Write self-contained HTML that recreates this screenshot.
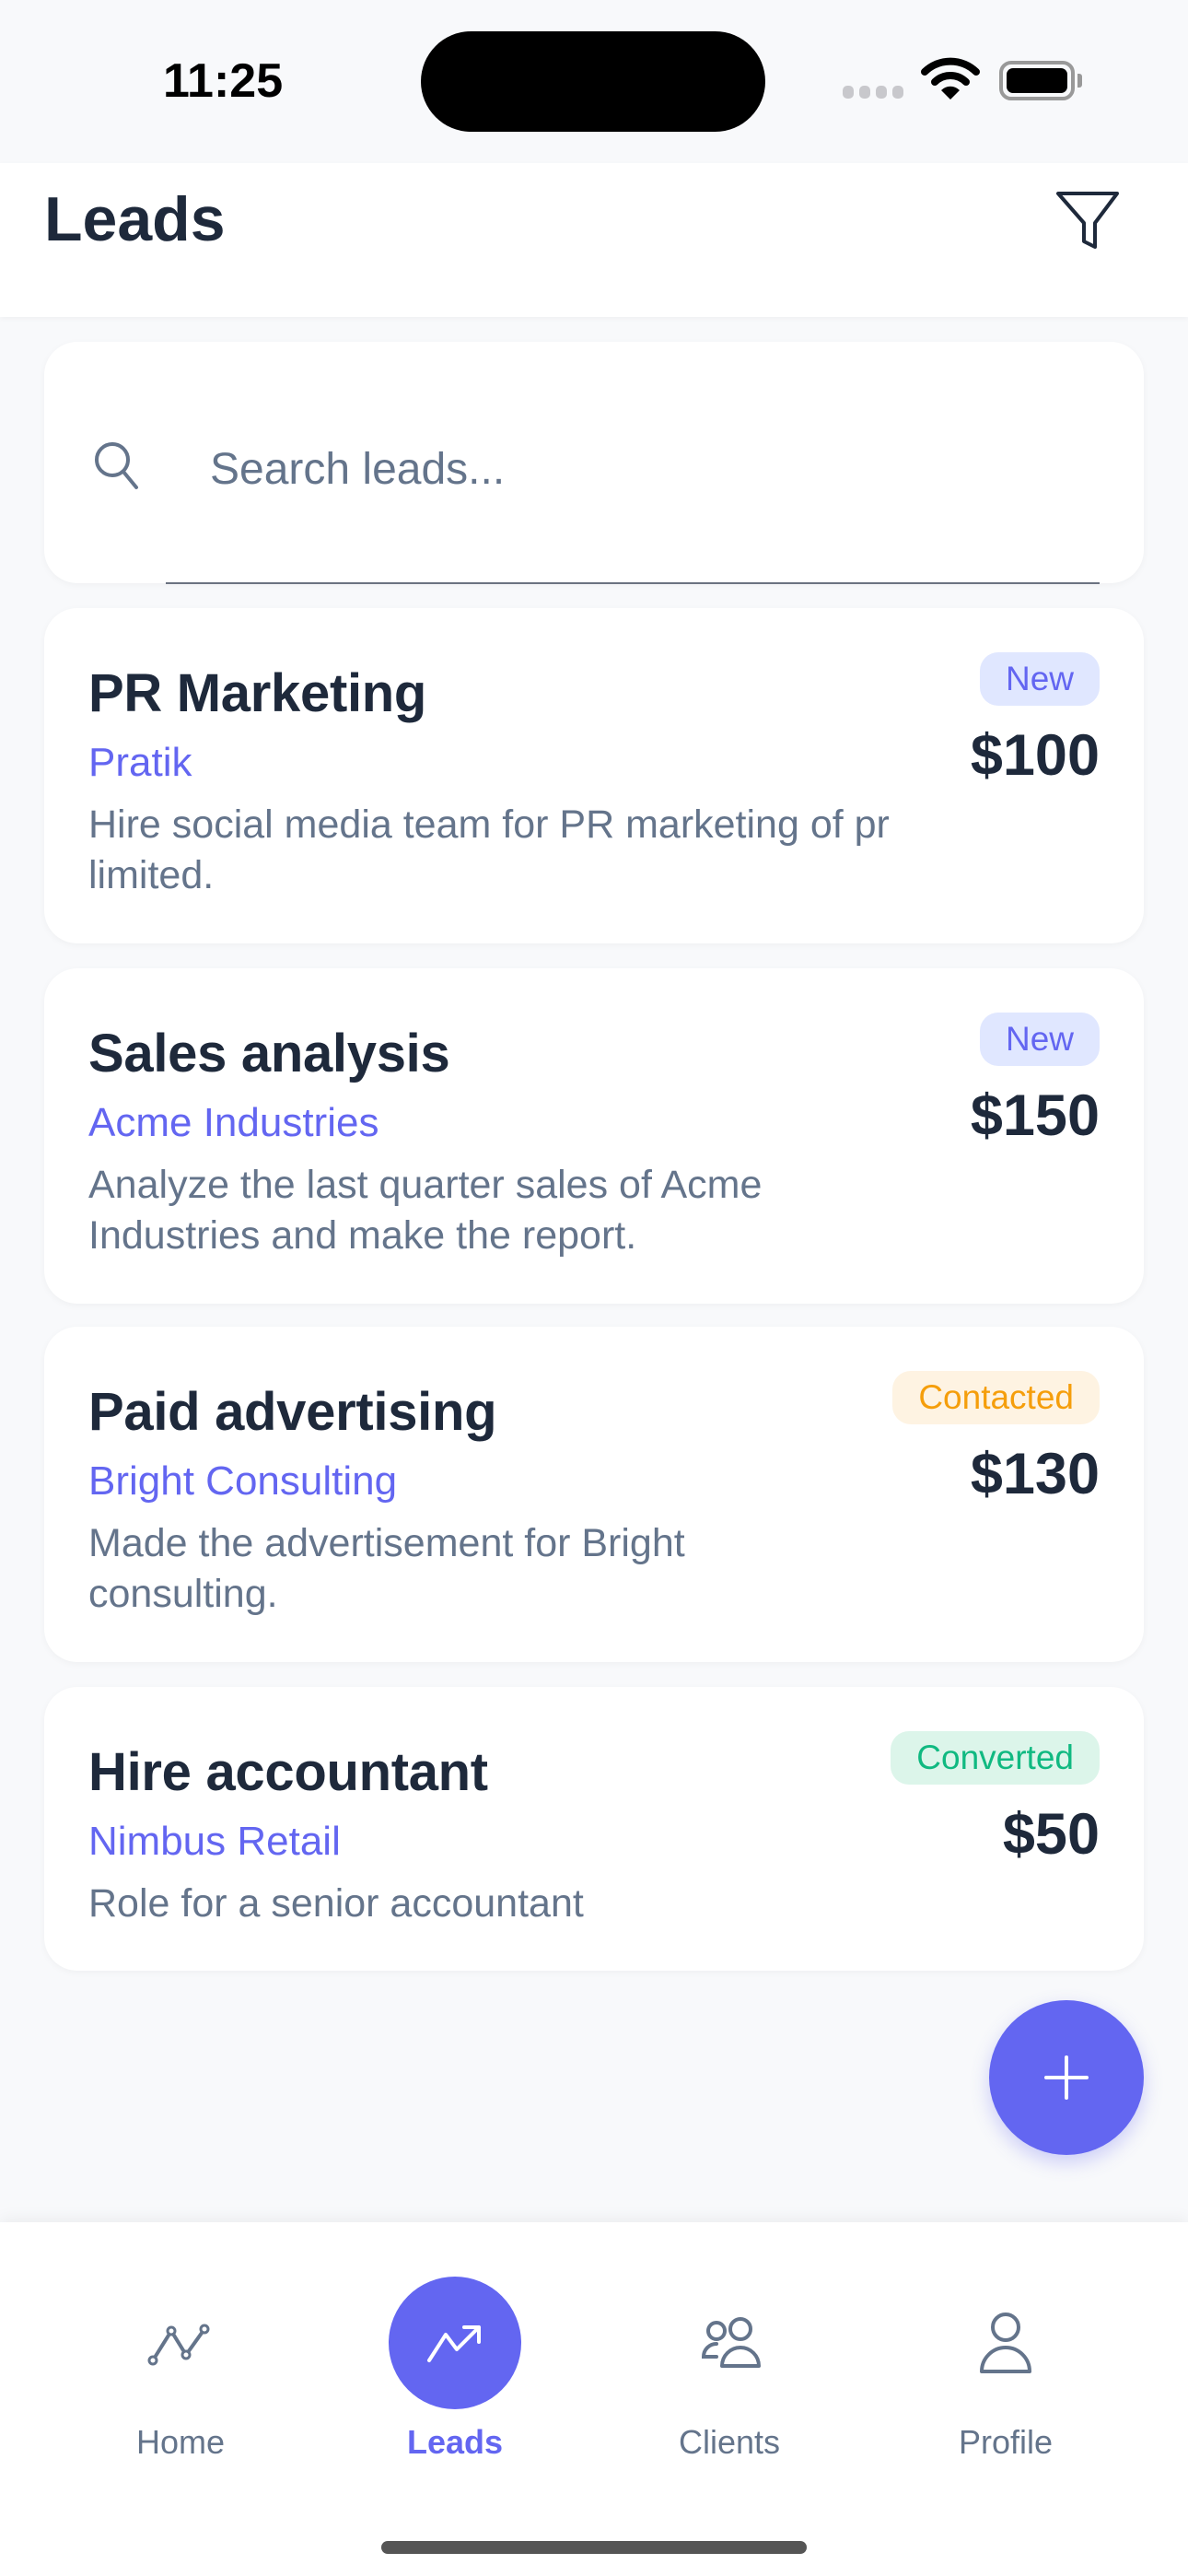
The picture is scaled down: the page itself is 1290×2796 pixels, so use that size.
<!DOCTYPE html>
<html><head><meta charset="utf-8"><style>
*{margin:0;padding:0;box-sizing:border-box}
body{width:1290px;height:2796px;background:#f8f9fb;font-family:"Liberation Sans",sans-serif;position:relative;overflow:hidden}
.a{position:absolute}
.card{position:absolute;left:48px;width:1194px;background:#fff;border-radius:36px;box-shadow:0 2px 8px rgba(0,0,0,0.04)}
.t{position:absolute;left:48px;font-size:58px;font-weight:bold;color:#1e293b;white-space:nowrap;letter-spacing:-0.3px}
.c{position:absolute;left:48px;font-size:44px;color:#6366f1;white-space:nowrap}
.d{position:absolute;left:48px;width:1000px;font-size:43px;line-height:55px;color:#64748b;white-space:nowrap}
.b{position:absolute;right:48px;height:58px;border-radius:20px;font-size:37px;line-height:58px;text-align:center;padding:0 28px}
.p{position:absolute;right:48px;font-size:63px;font-weight:bold;color:#1e293b}
.nl{position:absolute;top:2630px;font-size:36px;color:#64748b;width:300px;text-align:center}
</style></head><body>
<div class="a" style="left:177px;top:58px;font-size:52px;font-weight:bold;color:#000">11:25</div>
<div class="a" style="left:457px;top:34px;width:374px;height:109px;border-radius:55px;background:#000"></div>
<div class="a" style="left:915px;top:93px;display:flex;gap:6px"><i style="width:12px;height:14px;border-radius:5px;background:#c8c8cc;display:block"></i><i style="width:12px;height:14px;border-radius:5px;background:#c8c8cc;display:block"></i><i style="width:12px;height:14px;border-radius:5px;background:#c8c8cc;display:block"></i><i style="width:12px;height:14px;border-radius:5px;background:#c8c8cc;display:block"></i></div>
<svg class="a" style="left:1000px;top:62px" width="64" height="48" viewBox="0 0 64 48"><path d="M4 16 A40 40 0 0 1 60 16" stroke="#000" stroke-width="8" fill="none" stroke-linecap="round"/><path d="M15 27 A24 24 0 0 1 49 27" stroke="#000" stroke-width="8" fill="none" stroke-linecap="round"/><path d="M32 46 L22 36 A14 14 0 0 1 42 36 Z" fill="#000"/></svg>
<div class="a" style="left:1085px;top:66px;width:82px;height:43px;border:4px solid #999;border-radius:13px"><div style="margin:4px;height:27px;background:#000;border-radius:7px"></div></div>
<div class="a" style="left:1170px;top:80px;width:5px;height:15px;background:#999;border-radius:0 3px 3px 0"></div>

<div class="a" style="left:0;top:177px;width:1290px;height:167px;background:#fff;box-shadow:0 2px 6px rgba(0,0,0,0.04)"></div>
<div class="a" style="left:48px;top:199px;font-size:68px;font-weight:bold;color:#1e293b">Leads</div>
<svg class="a" style="left:1145px;top:206px" width="72" height="66" viewBox="0 0 72 66"><path d="M4 4 H68 L44 36 V62 L32 56 V36 Z" fill="none" stroke="#1e293b" stroke-width="4" stroke-linejoin="round"/></svg>

<div class="card" style="top:371px;height:262px"></div>
<svg class="a" style="left:100px;top:477px" width="54" height="56" viewBox="0 0 54 56"><circle cx="22" cy="22" r="17" fill="none" stroke="#64748b" stroke-width="4"/><path d="M34 35 L48 52" stroke="#64748b" stroke-width="4" stroke-linecap="round"/></svg>
<div class="a" style="left:228px;top:482px;font-size:48px;color:#64748b">Search leads...</div>
<div class="a" style="left:180px;top:632px;width:1014px;height:2px;background:#6b7280"></div>

<div class="card" style="top:660px;height:364px">
<div class="t" style="top:59px">PR Marketing</div>
<div class="c" style="top:143px">Pratik</div>
<div class="d" style="top:208px">Hire social media team for PR marketing of pr<br>limited.</div>
<div class="b" style="top:48px;background:#e0e7ff;color:#6366f1">New</div>
<div class="p" style="top:124px">$100</div>
</div>
<div class="card" style="top:1051px;height:364px">
<div class="t" style="top:59px">Sales analysis</div>
<div class="c" style="top:143px">Acme Industries</div>
<div class="d" style="top:208px">Analyze the last quarter sales of Acme<br>Industries and make the report.</div>
<div class="b" style="top:48px;background:#e0e7ff;color:#6366f1">New</div>
<div class="p" style="top:124px">$150</div>
</div>
<div class="card" style="top:1440px;height:364px">
<div class="t" style="top:59px">Paid advertising</div>
<div class="c" style="top:143px">Bright Consulting</div>
<div class="d" style="top:208px">Made the advertisement for Bright<br>consulting.</div>
<div class="b" style="top:48px;background:#fef3e2;color:#f59e0b">Contacted</div>
<div class="p" style="top:124px">$130</div>
</div>
<div class="card" style="top:1831px;height:308px">
<div class="t" style="top:59px">Hire accountant</div>
<div class="c" style="top:143px">Nimbus Retail</div>
<div class="d" style="top:208px">Role for a senior accountant</div>
<div class="b" style="top:48px;background:#dcf5ea;color:#10b981">Converted</div>
<div class="p" style="top:124px">$50</div>
</div>

<div class="a" style="left:1074px;top:2171px;width:168px;height:168px;border-radius:50%;background:#6366f1;box-shadow:0 8px 20px rgba(99,102,241,0.3)"></div>
<svg class="a" style="left:1132px;top:2229px" width="52" height="52" viewBox="0 0 52 52"><path d="M26 4V48M4 26H48" stroke="#fff" stroke-width="4" stroke-linecap="round"/></svg>

<div class="a" style="left:0;top:2412px;width:1290px;height:384px;background:#fff;box-shadow:0 -4px 16px rgba(0,0,0,0.05)"></div>
<svg class="a" style="left:160px;top:2520px" width="72" height="50" viewBox="0 0 72 50"><path d="M6 42 L26 10 L42 36 L62 8" fill="none" stroke="#64748b" stroke-width="4" stroke-linejoin="round"/><circle cx="6" cy="42" r="4" fill="#fff" stroke="#64748b" stroke-width="3"/><circle cx="26" cy="10" r="4" fill="#fff" stroke="#64748b" stroke-width="3"/><circle cx="42" cy="36" r="4" fill="#fff" stroke="#64748b" stroke-width="3"/><circle cx="62" cy="8" r="4" fill="#fff" stroke="#64748b" stroke-width="3"/></svg>
<div class="a" style="left:422px;top:2471px;width:144px;height:144px;border-radius:50%;background:#6366f1"></div>
<svg class="a" style="left:462px;top:2520px" width="66" height="46" viewBox="0 0 66 46"><path d="M4 42 L22 14 L34 30 L58 6 M42 6 H58 V22" fill="none" stroke="#fff" stroke-width="4" stroke-linecap="round" stroke-linejoin="round"/></svg>
<svg class="a" style="left:758px;top:2514px" width="70" height="60" viewBox="0 0 70 60"><circle cx="20" cy="16" r="9" fill="none" stroke="#64748b" stroke-width="4"/><circle cx="46" cy="14" r="11" fill="none" stroke="#64748b" stroke-width="4"/><path d="M20 44 H6 A14 14 0 0 1 20 30" fill="none" stroke="#64748b" stroke-width="4" stroke-linecap="round"/><path d="M26 54 A20 20 0 0 1 66 54 Z" fill="none" stroke="#64748b" stroke-width="4" stroke-linejoin="round"/></svg>
<svg class="a" style="left:1060px;top:2508px" width="64" height="72" viewBox="0 0 64 72"><circle cx="32" cy="18" r="14" fill="none" stroke="#64748b" stroke-width="4"/><path d="M6 66 A26 26 0 0 1 58 66 Z" fill="none" stroke="#64748b" stroke-width="4" stroke-linejoin="round"/></svg>
<div class="nl" style="left:46px">Home</div>
<div class="nl" style="left:344px;color:#6366f1;font-weight:bold">Leads</div>
<div class="nl" style="left:642px">Clients</div>
<div class="nl" style="left:942px">Profile</div>
<div class="a" style="left:414px;top:2758px;width:462px;height:14px;border-radius:7px;background:#555"></div>
</body></html>
